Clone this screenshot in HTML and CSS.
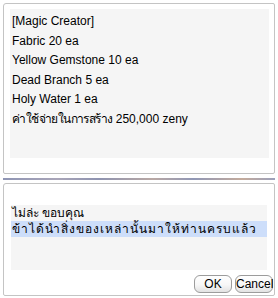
FILE: index.html
```html
<!DOCTYPE html>
<html lang="th">
<head>
    <meta charset="UTF-8">
    <title>Magic Creator</title>
    <link rel="stylesheet" href="styles.css">
</head>
<body>
    <div class="window window-message">
        <div class="message-box">
            <p>[Magic Creator]</p>
            <p>Fabric 20 ea</p>
            <p>Yellow Gemstone 10 ea</p>
            <p>Dead Branch 5 ea</p>
            <p>Holy Water 1 ea</p>
            <p><span class="thai-tight">ค่าใช้จ่ายในการสร้าง</span> 250,000 zeny</p>
        </div>
    </div>

    <div class="separator"></div>

    <div class="window window-menu">
        <ul class="menu-list">
            <li>ไม่ล่ะ ขอบคุณ</li>
            <li class="selected">ข้าได้นำสิ่งของเหล่านั้นมาให้ท่านครบแล้ว</li>
        </ul>
        <div class="buttons">
            <button class="btn">OK</button>
            <button class="btn">Cancel</button>
        </div>
    </div>
</body>
</html>
```

FILE: styles.css
```css
* {
    box-sizing: border-box;
    margin: 0;
    padding: 0;
}

body {
    padding: 3px 3px 0 3px;
    background-color: #ffffff;
    font-family: Tahoma, "Liberation Sans", "Noto Sans", sans-serif;
    font-size: 12px;
    color: #000000;
}

.window {
    width: 272px;
    border: 1px solid #c4c4c4;
    border-radius: 3px 2px 2px 2px;
    background-color: #ffffff;
}

.window-message {
    padding: 5px 5px 15px 6px;
}

.message-box {
    height: 149px;
    padding: 3px 2px 0 2px;
    background-color: #f5f5f5;
}

.message-box p {
    line-height: 19.5px;
    white-space: nowrap;
}

.thai-tight {
    letter-spacing: -0.6px;
}

.separator {
    height: 2px;
    margin: 4px 0 3px 0;
    background: linear-gradient(90deg, #8f95b4 0%, #a9a5b8 20%, #8e93b0 35%, #b9a8a4 55%, #9097b5 70%, #c4ab9c 88%, #9aa0bb 100%);
}

.window-menu {
    padding: 21px 1px 2px 7px;
}

.menu-list {
    list-style: none;
    height: 65px;
    margin-right: 6px;
    background-color: #f5f5f5;
}

.menu-list li {
    height: 16px;
    line-height: 16px;
    padding-left: 1px;
    white-space: nowrap;
}

.menu-list li.selected {
    background-color: #cddefa;
    letter-spacing: 1px;
}

.buttons {
    display: flex;
    justify-content: flex-end;
    gap: 3px;
    margin-top: 5px;
}

.btn {
    width: 38px;
    height: 18px;
    border: 1px solid #9c9c9c;
    border-radius: 6px;
    background: linear-gradient(180deg, #ffffff 0%, #f7f7f7 55%, #e2e2e2 100%);
    font-family: Tahoma, "Liberation Sans", "Noto Sans", sans-serif;
    font-size: 12px;
    color: #000000;
    line-height: 16px;
}
```
